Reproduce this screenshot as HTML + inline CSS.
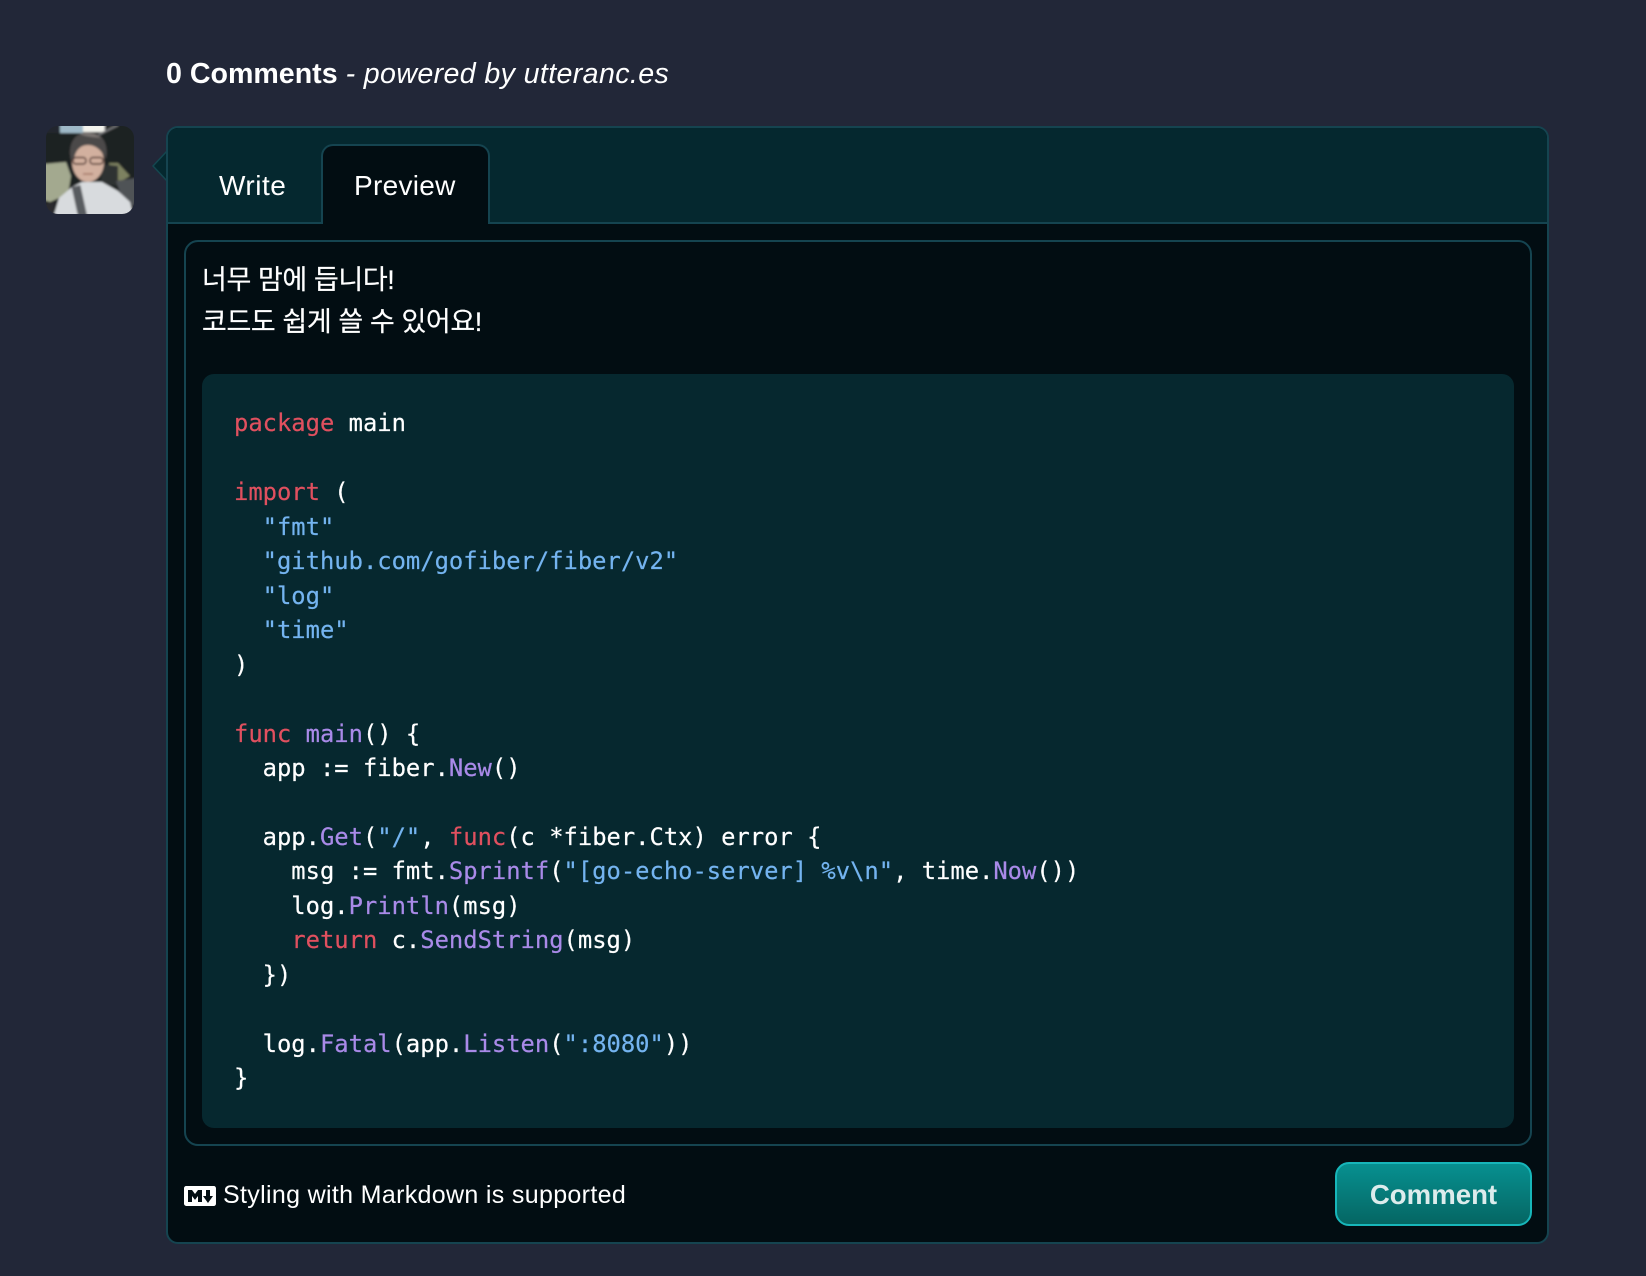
<!DOCTYPE html>
<html><head><meta charset="utf-8"><style>
html,body{margin:0;padding:0;width:1646px;height:1276px;overflow:hidden;background:#222738;color:#fff;font-family:"Liberation Sans","Noto Sans CJK KR",sans-serif}
.a{position:absolute;box-sizing:border-box}
pre{margin:0;font-family:"DejaVu Sans Mono",monospace;font-size:23.8px;line-height:34.48px;color:#fff;-webkit-text-stroke:.2px currentColor}
.k{color:#e0505f}.s{color:#74b4f0}.f{color:#a98ae8}
</style></head><body>
<div class="a" style="left:166px;top:57px;font-size:28.6px;line-height:34px;white-space:nowrap"><b>0 Comments</b> <i style="letter-spacing:.37px">- powered by utteranc.es</i></div>
<svg class="a" style="left:46px;top:126px;border-radius:12px" width="88" height="88" viewBox="0 0 88 88">
<defs><filter id="b" x="-5%" y="-5%" width="110%" height="110%"><feGaussianBlur stdDeviation="1.1"/></filter></defs>
<rect width="88" height="88" fill="#24262f"/>
<g filter="url(#b)">
<rect x="-3" y="4" width="94" height="88" fill="#1e2023"/>
<rect x="0" y="-3" width="14" height="10" fill="#24262f"/><rect x="60" y="-3" width="30" height="9" fill="#1e2023"/>
<rect x="14" y="-3" width="23" height="10" fill="#9fb9c8"/><rect x="37" y="-3" width="22" height="9" fill="#f4f4ee"/>
<path d="M52 9L72 -1" stroke="#77787a" stroke-width="2"/>
<path d="M-2 38L20 36L25 50L22 68L4 76L-2 74Z" fill="#a3a98f"/>
<path d="M63 37L72 37L84 50L74 56L64 46Z" fill="#7d8160"/>
<path d="M55 38L72 40L72 60L55 58Z" fill="#2e3033"/>
<path d="M70 55L90 52V80L78 78Z" fill="#505256"/>
<ellipse cx="42" cy="36" rx="16" ry="20" fill="#d2b09f"/>
<path d="M25 34C21 17 30 6 42 6C55 6 63 16 60 33C56 25 50 19 42 19C34 19 29 25 28 34Z" fill="#4c4949"/>
<path d="M34 8C40 5 50 7 55 12C48 11 40 11 34 8Z" fill="#7a7572"/>
<path d="M7 92L13 72L26 61L36 56H56L72 65L84 76L88 92Z" fill="#d8dbde"/>
<path d="M-2 78L9 76L7 92H-2Z" fill="#2a2b2e"/>
<path d="M30 60L37 92" stroke="#595c60" stroke-width="9"/>
<g fill="none" stroke="#4a2e2a" stroke-width="1.4"><rect x="27" y="31.5" width="13" height="6.5" rx="3"/><rect x="44" y="31.5" width="13" height="6.5" rx="3"/></g>
<path d="M37 48H47" stroke="#a57768" stroke-width="1.6"/>
</g></svg>
<svg class="a" style="left:150px;top:145px" width="20" height="42"><path d="M18 5L3 21L18 37" fill="#05282f" stroke="#14464f" stroke-width="1.5"/></svg>
<div class="a" style="left:166px;top:126px;width:1383px;height:1118px;background:#020d12;border:2px solid #154450;border-radius:12px;overflow:hidden">
<div class="a" style="left:0;top:0;width:1379px;height:96px;background:#05282f;border-bottom:2px solid #154450"></div>
<div class="a" style="left:153px;top:16px;width:169px;height:80px;background:#020d12;border:2px solid #154450;border-bottom:none;border-radius:12px 12px 0 0"></div>
</div>
<div class="a" style="left:219px;top:169px;font-size:28px;line-height:34px;letter-spacing:.5px">Write</div>
<div class="a" style="left:354px;top:169px;font-size:28px;line-height:34px;letter-spacing:.3px">Preview</div>
<div class="a" style="left:184px;top:240px;width:1348px;height:906px;border:2px solid #154450;border-radius:14px"></div>
<div class="a" style="left:202px;top:259px;font-size:27px;line-height:42px;white-space:nowrap;letter-spacing:-.4px;-webkit-text-stroke:.2px #fff">너무 맘에 듭니다!<br>코드도 쉽게 쓸 수 있어요!</div>
<div class="a" style="left:202px;top:374px;width:1312px;height:754px;background:#06282f;border-radius:12px"></div>
<pre class="a" style="left:234px;top:406.2px"><span class="k">package</span> main

<span class="k">import</span> (
  <span class="s">"fmt"</span>
  <span class="s">"github.com/gofiber/fiber/v2"</span>
  <span class="s">"log"</span>
  <span class="s">"time"</span>
)

<span class="k">func</span> <span class="f">main</span>() {
  app := fiber.<span class="f">New</span>()

  app.<span class="f">Get</span>(<span class="s">"/"</span>, <span class="k">func</span>(c *fiber.Ctx) error {
    msg := fmt.<span class="f">Sprintf</span>(<span class="s">"[go-echo-server] %v\n"</span>, time.<span class="f">Now</span>())
    log.<span class="f">Println</span>(msg)
    <span class="k">return</span> c.<span class="f">SendString</span>(msg)
  })

  log.<span class="f">Fatal</span>(app.<span class="f">Listen</span>(<span class="s">":8080"</span>))
}</pre>
<svg class="a" style="left:184px;top:1180px" width="32" height="32" viewBox="0 0 16 16"><path fill="#fff" d="M14.85 3c.63 0 1.15.52 1.14 1.15v7.7c0 .63-.51 1.15-1.15 1.15H1.15C.52 13 0 12.48 0 11.84V4.15C0 3.52.52 3 1.15 3ZM9 11V5H7L5.5 7 4 5H2v6h2V8l1.5 1.92L7 8v3Zm2.99.5L14.5 8H13V5h-2v3H9.5Z"/></svg>
<div class="a" style="left:223px;top:1180px;font-size:25px;line-height:30px;white-space:nowrap;letter-spacing:.33px">Styling with Markdown is supported</div>
<div class="a" style="left:1335px;top:1162px;width:197px;height:64px;border:2px solid #17b6ba;border-radius:14px;background:linear-gradient(#079090,#056663);color:#dcecec;font-weight:bold;font-size:27.6px;line-height:61px;text-align:center">Comment</div>
</body></html>
